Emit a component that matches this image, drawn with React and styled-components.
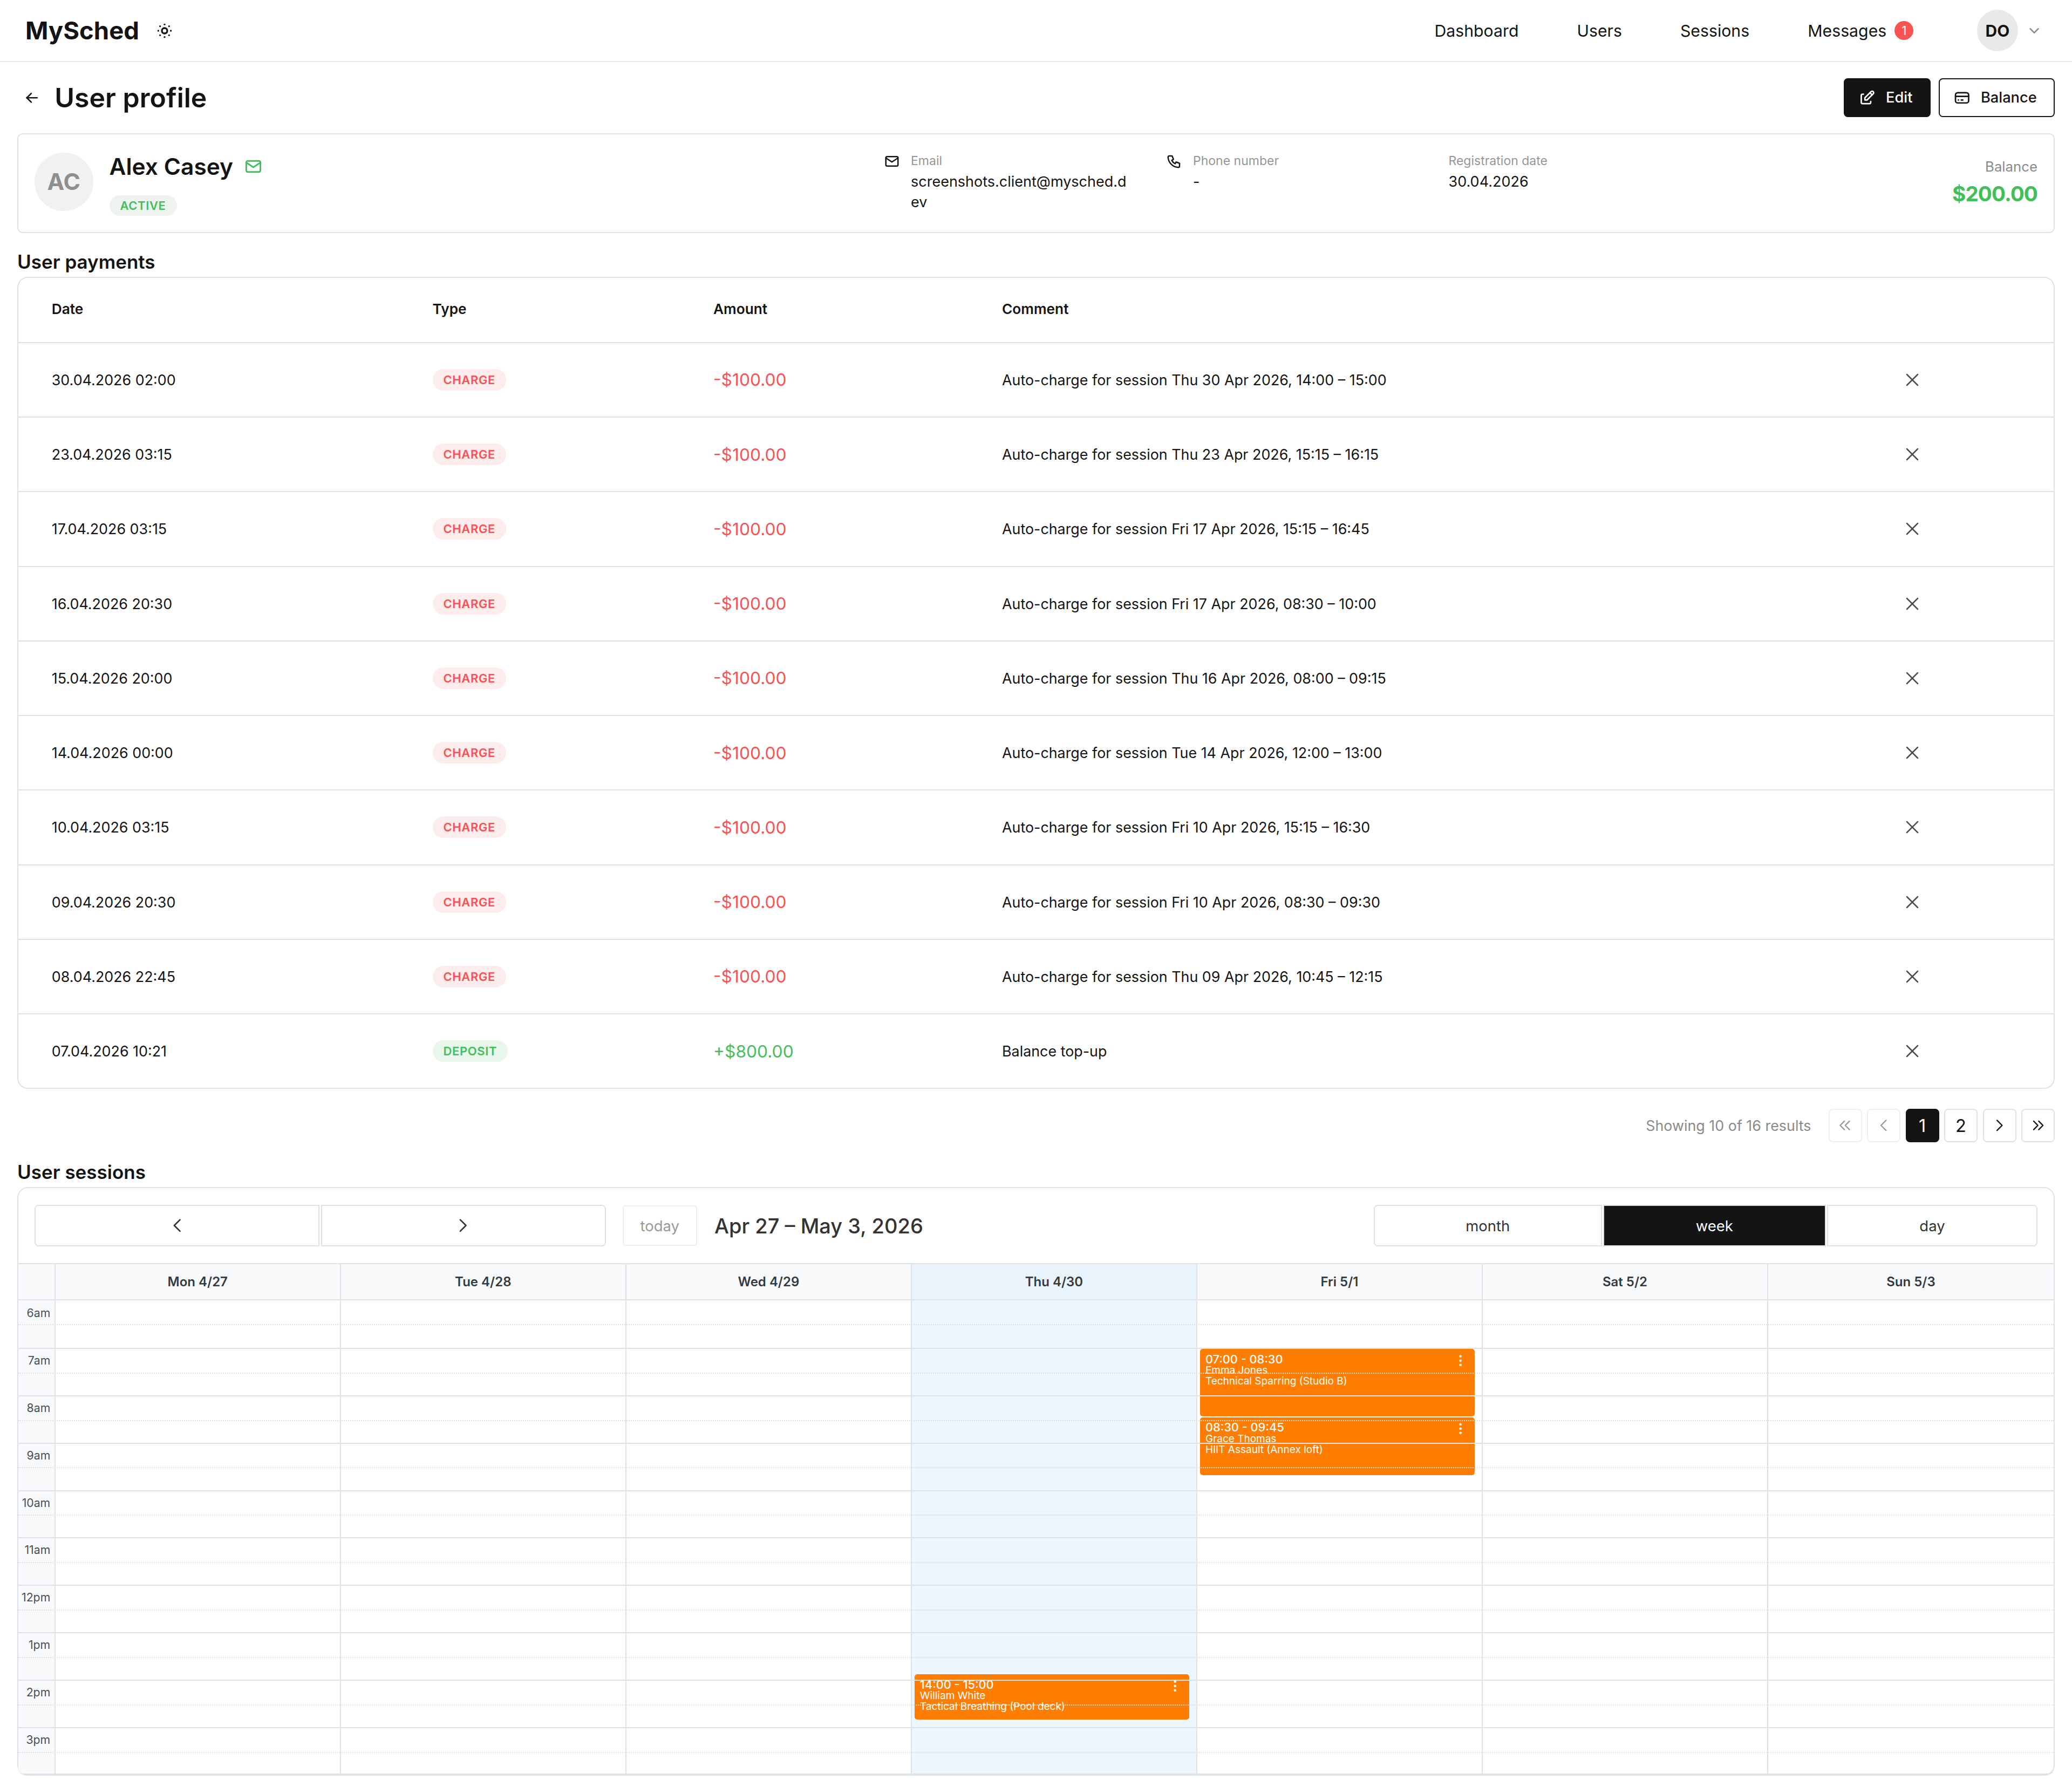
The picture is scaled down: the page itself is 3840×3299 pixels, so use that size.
import React from 'react';
import styled, { createGlobalStyle } from 'styled-components';
import {
  TbArrowLeft,
  TbBrightnessDown,
  TbChevronDown,
  TbChevronLeft,
  TbChevronRight,
  TbChevronsLeft,
  TbChevronsRight,
  TbCreditCard,
  TbDotsVertical,
  TbEdit,
  TbMail,
  TbPhone,
  TbX,
} from 'react-icons/tb';

const GlobalStyle = createGlobalStyle`
  html { zoom: 2.5; }
  body {
    margin: 0;
    background: #fff;
    color: #141414;
    font-family: Inter, "Noto Sans", "Liberation Sans", sans-serif;
  }
  * { box-sizing: border-box; }
`;

const Navbar = styled.nav`
  display: flex;
  align-items: center;
  height: 46px;
  padding: 0 22px 0 18.8px;
  border-bottom: 1px solid #e5e8eb;
`;

const Logo = styled.div`
  font-size: 18.2px;
  font-weight: 700;
`;

const ThemeToggle = styled.span`
  display: flex;
  margin-left: 11px;
  font-size: 16px;
`;

const NavLinks = styled.div`
  display: flex;
  align-items: center;
  gap: 43.2px;
  margin-left: auto;
  font-size: 12.1px;
`;

const NavLink = styled.a`
  display: flex;
  align-items: center;
  gap: 6px;
`;

const CountBadge = styled.span`
  display: flex;
  align-items: center;
  justify-content: center;
  width: 14px;
  height: 14px;
  border-radius: 50%;
  background: #fa5252;
  color: #fff;
  font-size: 9px;
`;

const UserMenu = styled.div`
  display: flex;
  align-items: center;
  gap: 6px;
  margin-left: 47px;
  color: #868e96;
  font-size: 12px;
`;

const UserAvatar = styled.div`
  display: flex;
  align-items: center;
  justify-content: center;
  width: 30.5px;
  height: 30.5px;
  border-radius: 50%;
  background: #e9e9e9;
  color: #141414;
  font-size: 12px;
  font-weight: 700;
`;

const Page = styled.main`
  padding: 0 12.8px 3px;
`;

const PageHeader = styled.header`
  display: flex;
  align-items: center;
  height: 52.7px;
`;

const BackLink = styled.span`
  display: flex;
  width: 27.7px;
  padding-left: 4.5px;
  font-size: 13px;
`;

const Title = styled.h1`
  margin: 0;
  font-size: 20px;
  font-weight: 600;
`;

const Actions = styled.div`
  display: flex;
  gap: 6px;
  margin-left: auto;
`;

const ActionButton = styled.button`
  display: flex;
  align-items: center;
  gap: 7.5px;
  height: 28.6px;
  padding: 0 12.5px 0 10px;
  border: 1px solid #141414;
  border-radius: 3px;
  background: ${(p) => (p.$primary ? '#141414' : '#fff')};
  color: ${(p) => (p.$primary ? '#fff' : '#141414')};
  font: 500 10.9px Inter, sans-serif;
  svg { font-size: 13px; }
`;

const Card = styled.section`
  border: 1px solid #dee2e6;
  border-radius: ${(p) => p.$radius || 4}px;
  background: #fff;
`;

const ProfileCard = styled(Card)`
  display: flex;
  align-items: center;
  height: 74px;
  padding: 0 12px;
`;

const ProfileMain = styled.div`
  display: flex;
  align-items: center;
  gap: 12px;
  width: 629.6px;
  margin-top: -2px;
`;

const Initials = styled.div`
  display: flex;
  align-items: center;
  justify-content: center;
  width: 43.4px;
  height: 43.4px;
  border-radius: 50%;
  background: #f1f1f1;
  color: #8f8f8f;
  font-size: 17px;
  font-weight: 700;
`;

const NameBlock = styled.div`
  padding-top: 4px;
`;

const NameRow = styled.div`
  display: flex;
  align-items: center;
  gap: 8px;
  font-size: 17px;
  font-weight: 600;
  svg { color: #40c057; font-size: 14px; }
`;

const StatusBadge = styled.span`
  display: inline-flex;
  align-items: center;
  height: ${(p) => (p.$large ? 16 : 15.5)}px;
  margin-top: ${(p) => (p.$large ? 0 : 11)}px;
  padding: 0 8px;
  border-radius: 10px;
  background: ${(p) => p.$bg};
  color: ${(p) => p.$color};
  font-size: 8.8px;
  font-weight: 600;
  letter-spacing: 0.25px;
`;

const Contact = styled.div`
  display: flex;
  align-self: flex-start;
  gap: 8px;
  width: ${(p) => p.$width}px;
  margin-top: 13px;
  svg { flex: none; font-size: 12px; margin-top: 1px; }
`;

const ContactLabel = styled.div`
  margin-bottom: 0.5px;
  color: #969696;
  font-size: 9.2px;
  line-height: 14px;
`;

const ContactValue = styled.div`
  width: ${(p) => p.$width || 'auto'};
  font-size: 10.8px;
  line-height: 15.4px;
  overflow-wrap: anywhere;
`;

const BalanceBox = styled.div`
  margin: -1.5px 0 0 auto;
  text-align: right;
`;

const BalanceLabel = styled.div`
  color: #8a8a8a;
  font-size: 10.3px;
  line-height: 16px;
`;

const BalanceValue = styled.div`
  margin-top: 1px;
  color: #40c057;
  font-size: 15.5px;
  font-weight: 700;
  letter-spacing: -0.4px;
  line-height: 22px;
`;

const SectionTitle = styled.h2`
  display: flex;
  align-items: flex-end;
  margin: 0;
  height: ${(p) => p.$height}px;
  padding-bottom: 2px;
  font-size: 14px;
  font-weight: 600;
  line-height: 18px;
`;

const PaymentRow = styled.div`
  display: grid;
  grid-template-columns: 282.3px 208.2px 214px 1fr 210px;
  align-items: center;
  height: ${(p) => (p.$head ? 47.4 : 55.3)}px;
  padding: ${(p) => (p.$head ? '0 0 1.5px 24.7px' : '0 0 0 24.7px')};
  border-top: ${(p) => (p.$head ? 'none' : '1px solid #dee2e6')};
  font-size: ${(p) => (p.$head ? 10.5 : 10.75)}px;
  font-weight: ${(p) => (p.$head ? 600 : 400)};
`;

const Amount = styled.span`
  color: ${(p) => p.$color};
  font-size: 12.7px;
`;

const DeleteCell = styled.span`
  display: flex;
  justify-content: center;
  color: #4d4d4d;
  font-size: 16px;
  svg { stroke-width: 1.5; }
`;

const Pagination = styled.div`
  display: flex;
  align-items: center;
  justify-content: flex-end;
  gap: 3.8px;
  margin-top: 14.6px;
  height: 25px;
`;

const ResultCount = styled.span`
  margin-right: 9px;
  color: #8a8a8a;
  font-size: 10.75px;
`;

const PageButton = styled.button`
  display: flex;
  align-items: center;
  justify-content: center;
  width: 24.8px;
  height: 25px;
  padding: 0;
  border: 1px solid ${(p) => (p.$active ? '#141414' : p.$disabled ? '#eceff1' : '#dee2e6')};
  border-radius: 3px;
  background: ${(p) => (p.$active ? '#141414' : '#fff')};
  color: ${(p) => (p.$active ? '#fff' : p.$disabled ? '#999' : '#141414')};
  font: 400 13px Inter, sans-serif;
  svg { font-size: 15px; stroke-width: 1.5; }
`;

const Toolbar = styled.div`
  display: flex;
  align-items: center;
  height: 55.8px;
  padding: 0 12px;
`;

const NavGroup = styled.div`
  display: flex;
  gap: 1px;
  width: 423.5px;
  height: 31px;
`;

const CalButton = styled.button`
  flex: ${(p) => (p.$width ? `0 0 ${p.$width}px` : 1)};
  display: flex;
  align-items: center;
  justify-content: center;
  padding: 0;
  border: 1px solid #dee2e6;
  border-radius: ${(p) => p.$corners || '0'};
  background: ${(p) => (p.$active ? '#141414' : '#fff')};
  color: ${(p) => (p.$active ? '#fff' : '#333')};
  font: 400 11px Inter, sans-serif;
  svg { font-size: 17px; stroke-width: 1.5; }
`;

const TodayButton = styled.button`
  width: 55px;
  height: 30px;
  margin-left: 12.5px;
  padding: 0;
  border: 1px solid #eceff1;
  border-radius: 2px;
  background: #fff;
  color: #999;
  font: 400 11px Inter, sans-serif;
`;

const RangeTitle = styled.h3`
  margin: 0 0 0 13px;
  color: #333;
  font-size: 15.2px;
  font-weight: 500;
`;

const ViewGroup = styled.div`
  display: flex;
  gap: 1px;
  height: 31px;
  margin-left: auto;
`;

const DayHead = styled.div`
  display: grid;
  grid-template-columns: 27.5px repeat(7, 1fr);
  height: 27.5px;
  border-top: 1px solid #dee2e6;
  border-bottom: 1px solid #dee2e6;
  background: #f8f9fa;
`;

const DayName = styled.div`
  display: flex;
  align-items: center;
  justify-content: center;
  border-right: ${(p) => (p.$last ? 'none' : '1px solid #dee2e6')};
  background: ${(p) => (p.$today ? '#e9f3fb' : 'transparent')};
  color: #343a40;
  font-size: 9.6px;
  font-weight: 600;
`;

const TimeGrid = styled.div`
  position: relative;
  display: grid;
  grid-template-columns: 27.5px repeat(7, 1fr);
  height: 351.5px;
  overflow: hidden;
  border-bottom: 1px solid #dee2e6;
  border-radius: 0 0 4px 4px;
`;

const Axis = styled.div`
  background: #f8f9fa;
  border-right: 1px solid #dee2e6;
`;

const AxisLabel = styled.div`
  height: 35.15px;
  padding: 4px 3px 0 0;
  color: #495057;
  font-size: 8.5px;
  text-align: right;
`;

const DayColumn = styled.div`
  position: relative;
  background: ${(p) => (p.$today ? '#edf5fd' : 'transparent')};
  border-right: ${(p) => (p.$last ? 'none' : '1px solid #dee2e6')};
`;

const SessionEvent = styled.div`
  position: absolute;
  top: ${(p) => p.$top}px;
  left: 2px;
  right: 5px;
  height: ${(p) => p.$height}px;
  padding: 3px 4px;
  border-radius: 2px;
  background: #ff7d00;
  color: #fff;
  font-size: 7.6px;
  line-height: 8px;
`;

const EventTime = styled.div`
  font-size: 8.7px;
  line-height: 9px;
  font-weight: 500;
`;

const EventMenu = styled.span`
  position: absolute;
  top: 3px;
  right: 5px;
  display: flex;
  font-size: 11px;
`;

const SlotLines = styled.div`
  position: absolute;
  inset: 0;
  pointer-events: none;
`;

const HourLine = styled.div`
  height: 35.15px;
  border-top: ${(p) => (p.$first ? 'none' : '1px solid #dee2e6')};
  &::after {
    content: '';
    display: block;
    height: 17.5px;
    border-bottom: 1px dotted #dee2e6;
  }
`;

const BADGE = {
  CHARGE: { bg: '#fdecec', color: '#fa5252' },
  DEPOSIT: { bg: '#e9f6ec', color: '#40c057' },
};

const payments = [
  ['30.04.2026 02:00', 'Auto-charge for session Thu 30 Apr 2026, 14:00 – 15:00'],
  ['23.04.2026 03:15', 'Auto-charge for session Thu 23 Apr 2026, 15:15 – 16:15'],
  ['17.04.2026 03:15', 'Auto-charge for session Fri 17 Apr 2026, 15:15 – 16:45'],
  ['16.04.2026 20:30', 'Auto-charge for session Fri 17 Apr 2026, 08:30 – 10:00'],
  ['15.04.2026 20:00', 'Auto-charge for session Thu 16 Apr 2026, 08:00 – 09:15'],
  ['14.04.2026 00:00', 'Auto-charge for session Tue 14 Apr 2026, 12:00 – 13:00'],
  ['10.04.2026 03:15', 'Auto-charge for session Fri 10 Apr 2026, 15:15 – 16:30'],
  ['09.04.2026 20:30', 'Auto-charge for session Fri 10 Apr 2026, 08:30 – 09:30'],
  ['08.04.2026 22:45', 'Auto-charge for session Thu 09 Apr 2026, 10:45 – 12:15'],
];

const days = ['Mon 4/27', 'Tue 4/28', 'Wed 4/29', 'Thu 4/30', 'Fri 5/1', 'Sat 5/2', 'Sun 5/3'];
const hours = ['6am', '7am', '8am', '9am', '10am', '11am', '12pm', '1pm', '2pm', '3pm'];

const events = {
  3: [{ top: 277.3, height: 33.6, time: '14:00 - 15:00', name: 'William White', what: 'Tactical Breathing (Pool deck)' }],
  4: [
    { top: 36, height: 50, time: '07:00 - 08:30', name: 'Emma Jones', what: 'Technical Sparring (Studio B)' },
    { top: 86.6, height: 42.8, time: '08:30 - 09:45', name: 'Grace Thomas', what: 'HIIT Assault (Annex loft)' },
  ],
};

function Payment({ date, type, amount, comment }) {
  const badge = BADGE[type];
  return (
    <PaymentRow>
      <span>{date}</span>
      <span>
        <StatusBadge $large $bg={badge.bg} $color={badge.color}>{type}</StatusBadge>
      </span>
      <Amount $color={badge.color}>{amount}</Amount>
      <span>{comment}</span>
      <DeleteCell><TbX /></DeleteCell>
    </PaymentRow>
  );
}

export default function App() {
  return (
    <>
      <GlobalStyle />
      <Navbar>
        <Logo>MySched</Logo>
        <ThemeToggle><TbBrightnessDown /></ThemeToggle>
        <NavLinks>
          <NavLink>Dashboard</NavLink>
          <NavLink>Users</NavLink>
          <NavLink>Sessions</NavLink>
          <NavLink>Messages<CountBadge>1</CountBadge></NavLink>
        </NavLinks>
        <UserMenu>
          <UserAvatar>DO</UserAvatar>
          <TbChevronDown />
        </UserMenu>
      </Navbar>

      <Page>
        <PageHeader>
          <BackLink><TbArrowLeft /></BackLink>
          <Title>User profile</Title>
          <Actions>
            <ActionButton $primary><TbEdit />Edit</ActionButton>
            <ActionButton><TbCreditCard />Balance</ActionButton>
          </Actions>
        </PageHeader>

        <ProfileCard>
          <ProfileMain>
            <Initials>AC</Initials>
            <NameBlock>
              <NameRow>Alex Casey <TbMail /></NameRow>
              <StatusBadge $bg="#eff3f0" $color="#40c057">ACTIVE</StatusBadge>
            </NameBlock>
          </ProfileMain>
          <Contact $width={209.2}>
            <TbMail />
            <div>
              <ContactLabel>Email</ContactLabel>
              <ContactValue $width="164px">screenshots.client@mysched.dev</ContactValue>
            </div>
          </Contact>
          <Contact $width={209.4}>
            <TbPhone />
            <div>
              <ContactLabel>Phone number</ContactLabel>
              <ContactValue>-</ContactValue>
            </div>
          </Contact>
          <Contact>
            <div>
              <ContactLabel>Registration date</ContactLabel>
              <ContactValue>30.04.2026</ContactValue>
            </div>
          </Contact>
          <BalanceBox>
            <BalanceLabel>Balance</BalanceLabel>
            <BalanceValue>$200.00</BalanceValue>
          </BalanceBox>
        </ProfileCard>

        <SectionTitle $height={32.6}>User payments</SectionTitle>
        <Card $radius={8}>
          <PaymentRow $head>
            <span>Date</span>
            <span>Type</span>
            <span>Amount</span>
            <span>Comment</span>
          </PaymentRow>
          {payments.map(([date, comment]) => (
            <Payment key={date} date={date} type="CHARGE" amount="-$100.00" comment={comment} />
          ))}
          <Payment date="07.04.2026 10:21" type="DEPOSIT" amount="+$800.00" comment="Balance top-up" />
        </Card>

        <Pagination>
          <ResultCount>Showing 10 of 16 results</ResultCount>
          <PageButton $disabled><TbChevronsLeft /></PageButton>
          <PageButton $disabled><TbChevronLeft /></PageButton>
          <PageButton $active>1</PageButton>
          <PageButton>2</PageButton>
          <PageButton><TbChevronRight /></PageButton>
          <PageButton><TbChevronsRight /></PageButton>
        </Pagination>

        <SectionTitle $height={33}>User sessions</SectionTitle>
        <Card $radius={8}>
          <Toolbar>
            <NavGroup>
              <CalButton $corners="3px 0 0 3px"><TbChevronLeft /></CalButton>
              <CalButton $corners="0 3px 3px 0"><TbChevronRight /></CalButton>
            </NavGroup>
            <TodayButton>today</TodayButton>
            <RangeTitle>Apr 27 – May 3, 2026</RangeTitle>
            <ViewGroup>
              <CalButton $width={169} $corners="3px 0 0 3px">month</CalButton>
              <CalButton $width={165} $active>week</CalButton>
              <CalButton $width={156} $corners="0 3px 3px 0">day</CalButton>
            </ViewGroup>
          </Toolbar>
          <DayHead>
            <DayName />
            {days.map((day, i) => (
              <DayName key={day} $today={i === 3} $last={i === 6}>{day}</DayName>
            ))}
          </DayHead>
          <TimeGrid>
            <Axis>
              {hours.map((hour) => <AxisLabel key={hour}>{hour}</AxisLabel>)}
            </Axis>
            {days.map((day, i) => (
              <DayColumn key={day} $today={i === 3} $last={i === 6}>
                {(events[i] || []).map((ev) => (
                  <SessionEvent key={ev.time} $top={ev.top} $height={ev.height}>
                    <EventTime>{ev.time}</EventTime>
                    <div>{ev.name}</div>
                    <div>{ev.what}</div>
                    <EventMenu><TbDotsVertical /></EventMenu>
                  </SessionEvent>
                ))}
              </DayColumn>
            ))}
            <SlotLines>
              {hours.map((hour, i) => <HourLine key={hour} $first={i === 0} />)}
            </SlotLines>
          </TimeGrid>
        </Card>
      </Page>
    </>
  );
}
